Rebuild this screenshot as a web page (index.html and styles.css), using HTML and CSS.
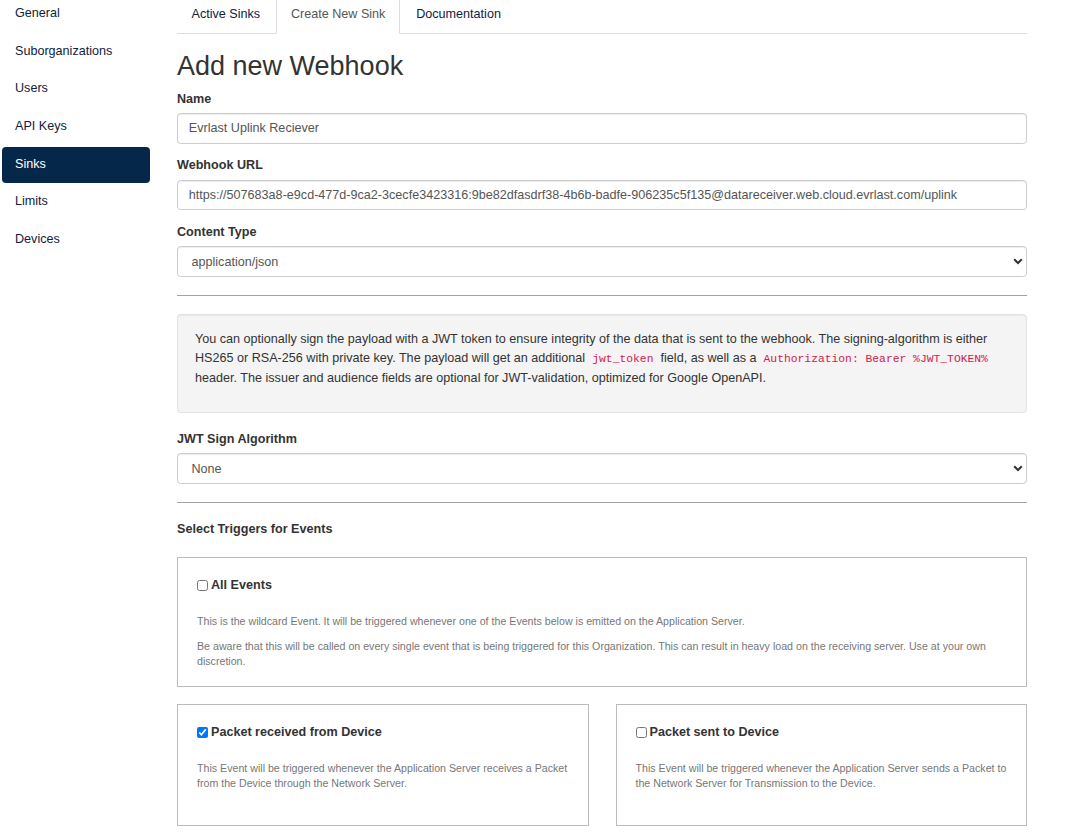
FILE: index.html
```html
<!DOCTYPE html>
<html>
<head>
<meta charset="utf-8">
<link rel="stylesheet" href="styles.css">
</head>
<body>
<div class="page">
  <nav class="sidebar">
    <a class="pill">General</a>
    <a class="pill">Suborganizations</a>
    <a class="pill">Users</a>
    <a class="pill">API Keys</a>
    <a class="pill active">Sinks</a>
    <a class="pill">Limits</a>
    <a class="pill">Devices</a>
  </nav>
  <main class="main">
    <ul class="tabs">
      <li class="tab">Active Sinks</li>
      <li class="tab active">Create New Sink</li>
      <li class="tab">Documentation</li>
    </ul>
    <h1 class="title">Add new Webhook</h1>

    <div class="group">
      <label class="label">Name</label>
      <input class="control" type="text" value="Evrlast Uplink Reciever">
    </div>
    <div class="group">
      <label class="label">Webhook URL</label>
      <input class="control" type="text" value="https://507683a8-e9cd-477d-9ca2-3cecfe3423316:9be82dfasdrf38-4b6b-badfe-906235c5f135@datareceiver.web.cloud.evrlast.com/uplink">
    </div>
    <div class="group">
      <label class="label">Content Type</label>
      <div class="select-wrap">
        <select class="control select"><option>application/json</option></select>
        <svg class="chev" width="10" height="7" viewBox="0 0 10 7"><path d="M1.2 1.3 L5 5 L8.8 1.3" fill="none" stroke="#333" stroke-width="2"/></svg>
      </div>
    </div>

    <hr class="rule">

    <div class="well">
      <p>You can optionally sign the payload with a JWT token to ensure integrity of the data that is sent to the webhook. The signing-algorithm is either HS265 or RSA-256 with private key. The payload will get an additional <code>jwt_token</code> field, as well as a <code>Authorization: Bearer %JWT_TOKEN%</code> header. The issuer and audience fields are optional for JWT-validation, optimized for Google OpenAPI.</p>
    </div>

    <div class="group">
      <label class="label">JWT Sign Algorithm</label>
      <div class="select-wrap">
        <select class="control select"><option>None</option></select>
        <svg class="chev" width="10" height="7" viewBox="0 0 10 7"><path d="M1.2 1.3 L5 5 L8.8 1.3" fill="none" stroke="#333" stroke-width="2"/></svg>
      </div>
    </div>

    <hr class="rule">

    <p class="label section">Select Triggers for Events</p>

    <div class="event">
      <label class="event-title"><input type="checkbox" class="cb"> All Events</label>
      <p class="desc">This is the wildcard Event. It will be triggered whenever one of the Events below is emitted on the Application Server.</p>
      <p class="desc">Be aware that this will be called on every single event that is being triggered for this Organization. This can result in heavy load on the receiving server. Use at your own discretion.</p>
    </div>

    <div class="event-row">
      <div class="event tall">
        <label class="event-title"><input type="checkbox" class="cb" checked> Packet received from Device</label>
        <p class="desc">This Event will be triggered whenever the Application Server receives a Packet from the Device through the Network Server.</p>
      </div>
      <div class="event tall">
        <label class="event-title"><input type="checkbox" class="cb"> Packet sent to Device</label>
        <p class="desc">This Event will be triggered whenever the Application Server sends a Packet to the Network Server for Transmission to the Device.</p>
      </div>
    </div>
  </main>
</div>
</body>
</html>
```

FILE: styles.css
```css
html, body {
  margin: 0;
  padding: 0;
  background: #fff;
}
body {
  font-family: "Liberation Sans", Arial, sans-serif;
  font-size: 12.6px;
  line-height: 18px;
  color: #333;
}
.page {
  display: flex;
  gap: 27px;
  margin-top: -4px;
}
.sidebar {
  width: 148px;
  padding-left: 2px;
  display: flex;
  flex-direction: column;
  flex-shrink: 0;
}
.pill {
  display: block;
  padding: 8px 13px 10px;
  margin-bottom: 1.7px;
  border-radius: 4px;
  color: #10213d;
  text-decoration: none;
}
.pill.active {
  background: #05284a;
  color: #fff;
}
.main {
  width: 850px;
  flex-shrink: 0;
}
.tabs {
  list-style: none;
  margin: 0;
  padding: 0;
  display: flex;
  border-bottom: 1px solid #ddd;
}
.tab {
  padding: 8px 13.5px 10px;
  margin-right: 1.8px;
  margin-bottom: -1px;
  border: 1px solid transparent;
  border-radius: 3.6px 3.6px 0 0;
  color: #10213d;
}
.tab.active {
  color: #555;
  background: #fff;
  border-color: #ddd;
  border-bottom-color: #fff;
}
.title {
  font-size: 27px;
  font-weight: 500;
  line-height: 1.1;
  margin: 18px 0 9px;
  color: #333;
}
.group {
  margin-bottom: 13.5px;
}
.label {
  display: block;
  font-weight: bold;
  line-height: 16px;
  margin-bottom: 6.5px;
}
.control {
  display: block;
  box-sizing: border-box;
  width: 100%;
  height: 30.6px;
  padding: 5.4px 10.8px;
  font-family: inherit;
  font-size: 12.6px;
  line-height: 18px;
  color: #555;
  background: #fff;
  border: 1px solid #ccc;
  border-radius: 3.6px;
  box-shadow: inset 0 1px 1px rgba(0,0,0,.075);
  outline: none;
}
.select-wrap {
  position: relative;
}
.select {
  appearance: none;
  -webkit-appearance: none;
  padding-left: 13.5px;
}
.chev {
  position: absolute;
  right: 4px;
  top: 12px;
}
.rule {
  border: 0;
  border-top: 1px solid #a3a3a3;
  margin: 18px 0;
}
.well {
  background: #f4f4f4;
  border: 1px solid #e3e3e3;
  border-radius: 3.6px;
  box-shadow: inset 0 1px 1px rgba(0,0,0,.05);
  padding: 15px 17px 15px;
  margin-bottom: 18px;
}
.well p {
  margin: 0 0 9px;
  line-height: 19px;
}
code {
  font-family: "Liberation Mono", "DejaVu Sans Mono", monospace;
  font-size: 11.34px;
  color: #c7254e;
  background: #f9f2f4;
  padding: 0 3.6px;
  border-radius: 3.6px;
}
.section {
  margin: 0 0 20px;
}
.event {
  border: 1px solid #bbb;
  padding: 18px 19px 17.2px;
  margin-bottom: 17.2px;
}
.event-title {
  display: flex;
  align-items: center;
  gap: 3px;
  font-weight: bold;
  font-size: 12.6px;
  color: #333;
  margin-bottom: 20px;
}
.cb {
  width: 11px;
  height: 11px;
  margin: 0;
}
.desc {
  font-size: 10.65px;
  line-height: 15px;
  color: #777;
  margin: 0 0 10px;
}
.desc:last-child {
  margin-bottom: 0;
}
.event-row {
  display: flex;
  gap: 27px;
}
.event-row .event {
  flex: 1;
  padding-top: 18px;
  padding-bottom: 34px;
}
```
